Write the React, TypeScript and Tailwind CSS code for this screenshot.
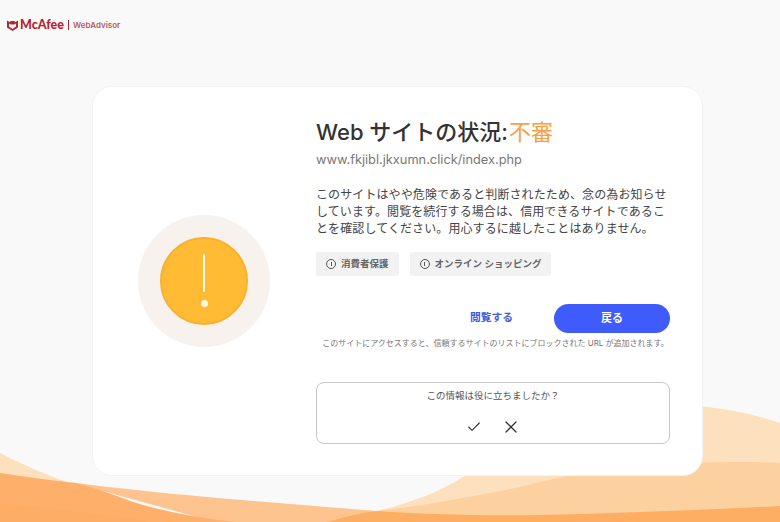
import { Check, X } from "lucide-react";

const jp = "font-['Inter','Noto_Sans_CJK_JP',sans-serif]";

// Background waves along the bottom of the page
function Waves() {
  return (
    <svg className="absolute inset-0" width="780" height="522" viewBox="0 0 780 522" fill="none">
      <path d="M0 453 C25 466 50 476 78 486 L78 522 L0 522 Z" fill="#fde0bd" />
      <path d="M370 522 L377 511 C410 503 440 492 463 477 C520 440 590 412 660 406 C690 403 740 409 780 423 L780 522 Z" fill="#fde0bd" />
      <path d="M377 511 C430 505 480 495 520 487 C540 482 555 478 570 476 C640 463 720 460 780 463 L780 522 L377 522 Z" fill="#fdd09f" />
      <path d="M70 482 C140 492 260 502 377 511 L345 522 L215 522 Z" fill="#fdc48f" />
      <path d="M0 473 C25 477 50 480 75 483 C90 486 115 495 133 502 C165 512 200 518 235 522 L0 522 Z" fill="#feb06a" />
      <path d="M0 504 C55 508 110 515 150 522 L0 522 Z" fill="#fdad66" />
      <path d="M327 522 C345 517 360 513 377 511 C420 514 480 516 540 515 C620 513 700 510 780 506 L780 522 Z" fill="#feae62" />
    </svg>
  );
}

function Logo() {
  return (
    <div className="flex items-center pl-[7px] pt-[19px]">
      <svg width="11" height="12" viewBox="0 0 22 24">
        <path
          d="M0 3 L5 6 L8 4 H14 L17 6 L22 3 V17 L11 24 L0 17 Z M4 9 V15 L11 20 L18 15 V9 L14 11 H8 Z"
          fill="#b8232f"
          fillRule="evenodd"
        />
      </svg>
      <span className="ml-[2px] font-['Lato',sans-serif] text-[12.5px] leading-none font-black text-[#b8232f]">McAfee</span>
      <span className="mx-[4px] h-[10px] w-px bg-[#b8232f]" />
      <span className="font-['Inter',sans-serif] text-[8px] leading-none font-semibold text-[#b65a60]">WebAdvisor</span>
    </div>
  );
}

function WarningIcon() {
  return (
    <div className="flex h-[132px] w-[132px] items-center justify-center rounded-full bg-[#f7f2ee]">
      <div className="flex h-[88px] w-[88px] flex-col items-center rounded-full border-2 border-[#f9b02c] bg-[#ffbb33] pt-[15px]">
        <div className="h-[38px] w-[2px] rounded-full bg-[#fff8e8]" />
        <div className="mt-[8px] h-[7px] w-[7px] rounded-full bg-[#fff8e8]" />
      </div>
    </div>
  );
}

function InfoDot() {
  return (
    <span className="flex h-[10px] w-[10px] items-center justify-center rounded-full border-[1.5px] border-[#555]">
      <span className="h-[4px] w-px bg-[#555]" />
    </span>
  );
}

function Tag({ label }: { label: string }) {
  return (
    <div className="flex h-[24px] items-center gap-[5px] rounded-[3px] bg-[#f2f2f2] px-[10px] text-[9.5px] font-semibold text-[#666]">
      <InfoDot />
      <span>{label}</span>
    </div>
  );
}

export default function App() {
  return (
    <div className={`relative h-[522px] w-[780px] overflow-hidden bg-[#f9f9fa] ${jp}`}>
      <Waves />
      <div className="relative h-[86px]">
        <Logo />
      </div>
      <div className="relative ml-[92px] flex h-[390px] w-[611px] rounded-[20px] border border-[#f3f3f3] bg-white">
        <div className="flex w-[222px] items-center justify-center">
          <WarningIcon />
        </div>
        <div className="ml-px w-[354px] pt-[30px]">
          <h1 className="text-[22px] leading-[30px] font-medium text-[#333]">
            <span>Web サイトの状況:</span>
            <span className="ml-px font-normal text-[#f9a03f]">不審</span>
          </h1>
          <p className="mt-[3px] text-[12.8px] leading-[20px] text-[#777]">www.fkjibl.jkxumn.click/index.php</p>
          <p className="mt-[16px] text-[12px] leading-[17px] tracking-[0.1px] text-[#444]">
            このサイトはやや危険であると判断されたため、念の為お知らせしています。閲覧を続行する場合は、信用できるサイトであることを確認してください。用心するに越したことはありません。
          </p>
          <div className="mt-[15px] flex gap-[11px]">
            <Tag label="消費者保護" />
            <Tag label="オンライン ショッピング" />
          </div>
          <div className="mt-[28px] flex items-center justify-end">
            <button className="mr-[41px] text-[10.75px] font-bold text-[#3f5bd8]">閲覧する</button>
            <button className="h-[29px] w-[116px] rounded-full bg-[#3f5bfb] text-[11px] font-bold text-white">戻る</button>
          </div>
          <p className="mt-[4px] pl-[5px] text-center text-[8px] leading-[12px] whitespace-nowrap text-[#777]">
            このサイトにアクセスすると、信頼するサイトのリストにブロックされた URL が追加されます。
          </p>
          <div className="mt-[33px] flex h-[62px] flex-col items-center rounded-[8px] border border-[#c8c8c8] bg-white pt-[6px]">
            <p className="text-[9.5px] leading-[14px] text-[#555]">この情報は役に立ちましたか？</p>
            <div className="mt-[14px] flex items-center gap-[19px] text-[#333]">
              <Check size={16} strokeWidth={1.6} />
              <X size={20} strokeWidth={1.5} />
            </div>
          </div>
        </div>
      </div>
    </div>
  );
}
